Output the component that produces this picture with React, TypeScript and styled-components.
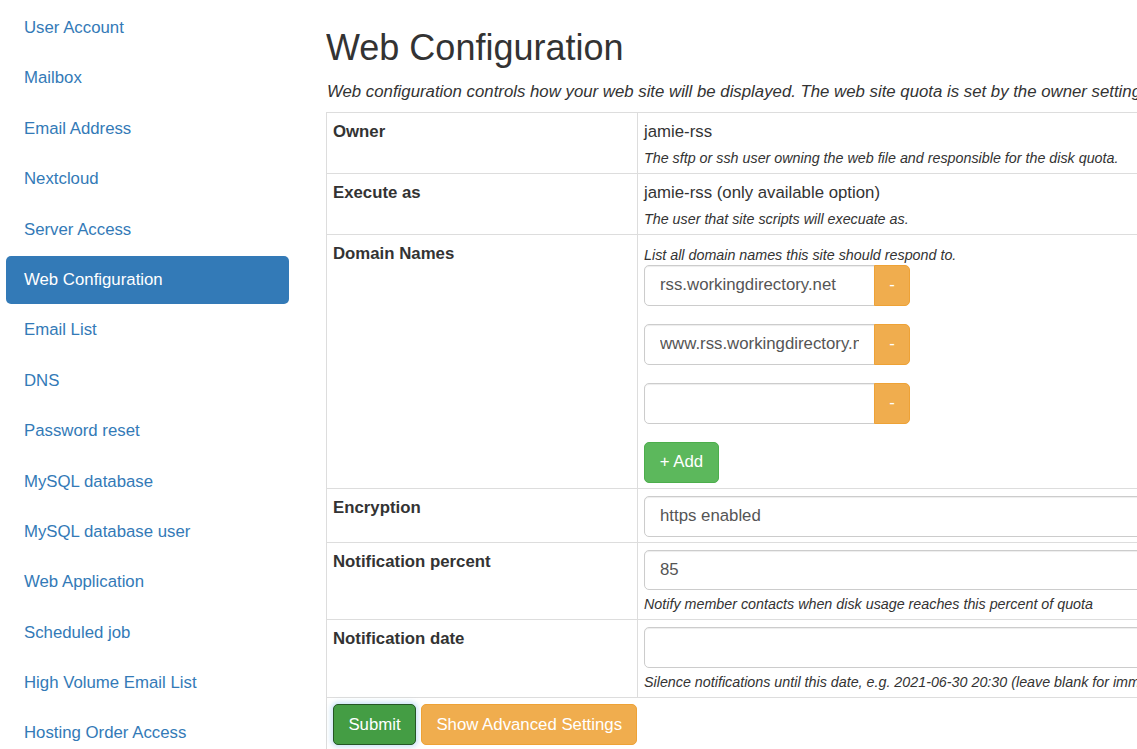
import styled, { createGlobalStyle } from "styled-components"

const GlobalStyle = createGlobalStyle`
	html, body {
		margin: 0;
		padding: 0;
		overflow: hidden;
	}
	body {
		font-family: "Liberation Sans", Helvetica, Arial, sans-serif;
		font-size: 16.8px;
		line-height: 24px;
		color: #333;
		background: #fff;
	}
	* {
		box-sizing: border-box;
	}
`

const Page = styled.div`
	display: flex;
	width: 1137px;
	height: 749px;
`

const Sidebar = styled.nav`
	flex: 0 0 326px;
	padding: 4px 0 0 6px;
`

const Pills = styled.ul`
	list-style: none;
	margin: 0;
	padding: 0;
	width: 283px;
	display: flex;
	flex-direction: column;
	gap: 2.4px;
`

const Pill = styled.li<{ $active?: boolean }>`
	display: block;
	padding: 12px 18px;
	border-radius: 5px;
	line-height: 24px;
	color: ${(p) => (p.$active ? "#fff" : "#337ab7")};
	background: ${(p) => (p.$active ? "#337ab7" : "transparent")};
	cursor: pointer;
`

const Main = styled.main`
	flex: 1;
	min-width: 0;
	overflow: hidden;
`

const Title = styled.h1`
	font-size: 36px;
	font-weight: 400;
	line-height: 40px;
	margin: 28px 0 12px;
	color: #333;
`

const Lead = styled.p`
	font-style: italic;
	white-space: nowrap;
	margin: 0 0 8px 1px;
`

const Table = styled.table`
	width: 1000px;
	table-layout: fixed;
	border-collapse: collapse;
	border: 1px solid #ddd;
`

const Row = styled.tr`
	border-top: 1px solid #ddd;
`

const LabelCell = styled.th`
	width: 311px;
	padding: 7px 6px 5px;
	text-align: left;
	vertical-align: top;
	font-weight: 700;
	border-right: 1px solid #ddd;
`

const ValueCell = styled.td`
	padding: 7px 6px 5px;
	vertical-align: top;
	overflow: hidden;
`

const ActionCell = styled.td`
	padding: 6px;
`

const ButtonBar = styled.div`
	display: flex;
	gap: 5px;
`

const Hint = styled.div<{ $gap?: number }>`
	font-size: 14.3px;
	font-style: italic;
	line-height: 20px;
	margin-top: ${(p) => p.$gap ?? 4}px;
	white-space: nowrap;
`

const Field = styled.input<{ $grouped?: boolean }>`
	display: block;
	width: ${(p) => (p.$grouped ? "231px" : "100%")};
	height: 40.8px;
	padding: 7px 15px;
	font-family: inherit;
	font-size: 16.8px;
	color: #555;
	background: #fff;
	border: 1px solid #ccc;
	border-radius: ${(p) => (p.$grouped ? "5px 0 0 5px" : "5px")};
	box-shadow: inset 0 1px 1px rgba(0, 0, 0, 0.075);
	outline: none;
`

const DomainList = styled.div`
	display: flex;
	flex-direction: column;
	gap: 18.2px;
`

const InputGroup = styled.div`
	display: flex;
`

const Button = styled.button<{ $kind: "warning" | "success" | "active-success" }>`
	height: 40.8px;
	padding: 7px 14.4px;
	font-family: inherit;
	font-size: 16.8px;
	line-height: 24px;
	white-space: nowrap;
	color: #fff;
	border-radius: 5px;
	cursor: pointer;
	background: ${(p) =>
		p.$kind === "warning" ? "#f0ad4e" : p.$kind === "success" ? "#5cb85c" : "#449d44"};
	border: 1px solid
		${(p) =>
			p.$kind === "warning" ? "#eea236" : p.$kind === "success" ? "#4cae4c" : "#255625"};
	box-shadow: ${(p) =>
		p.$kind === "active-success" ? "0 0 5px 2px rgba(102, 175, 233, 0.35)" : "none"};
`

const MinusButton = styled(Button)`
	width: 36px;
	padding: 0;
	border-radius: 0 5px 5px 0;
	margin-left: -1px;
`

const AddButton = styled(Button)`
	align-self: flex-start;
	width: 75px;
	padding: 0;
`

const navItems = [
	"User Account",
	"Mailbox",
	"Email Address",
	"Nextcloud",
	"Server Access",
	"Web Configuration",
	"Email List",
	"DNS",
	"Password reset",
	"MySQL database",
	"MySQL database user",
	"Web Application",
	"Scheduled job",
	"High Volume Email List",
	"Hosting Order Access",
]

const domains = ["rss.workingdirectory.net", "www.rss.workingdirectory.net", ""]

export default function App() {
	return (
		<>
			<GlobalStyle />
			<Page>
				<Sidebar>
					<Pills>
						{navItems.map((item) => (
							<Pill
								key={item}
								$active={item === "Web Configuration"}
							>
								{item}
							</Pill>
						))}
					</Pills>
				</Sidebar>

				<Main>
					<Title>Web Configuration</Title>
					<Lead>
						Web configuration controls how your web site will be displayed. The web site quota is set
						by the owner settings.
					</Lead>

					<Table>
						<tbody>
							<Row>
								<LabelCell>Owner</LabelCell>
								<ValueCell>
									jamie-rss
									<Hint>The sftp or ssh user owning the web file and responsible for the disk quota.</Hint>
								</ValueCell>
							</Row>
							<Row>
								<LabelCell>Execute as</LabelCell>
								<ValueCell>
									jamie-rss (only available option)
									<Hint>The user that site scripts will execuate as.</Hint>
								</ValueCell>
							</Row>
							<Row>
								<LabelCell>Domain Names</LabelCell>
								<ValueCell>
									<Hint $gap={3}>List all domain names this site should respond to.</Hint>
									<DomainList>
										{domains.map((d, i) => (
											<InputGroup key={i}>
												<Field
													$grouped
													defaultValue={d}
												/>
												<MinusButton $kind="warning">-</MinusButton>
											</InputGroup>
										))}
										<AddButton $kind="success">+ Add</AddButton>
									</DomainList>
								</ValueCell>
							</Row>
							<Row>
								<LabelCell>Encryption</LabelCell>
								<ValueCell>
									<Field defaultValue="https enabled" />
								</ValueCell>
							</Row>
							<Row>
								<LabelCell>Notification percent</LabelCell>
								<ValueCell>
									<Field defaultValue="85" />
									<Hint>Notify member contacts when disk usage reaches this percent of quota</Hint>
								</ValueCell>
							</Row>
							<Row>
								<LabelCell>Notification date</LabelCell>
								<ValueCell>
									<Field defaultValue="" />
									<Hint>
										Silence notifications until this date, e.g. 2021-06-30 20:30 (leave blank for immediate
										notifications)
									</Hint>
								</ValueCell>
							</Row>
							<Row>
								<ActionCell colSpan={2}>
									<ButtonBar>
										<Button $kind="active-success">Submit</Button>
										<Button $kind="warning">Show Advanced Settings</Button>
									</ButtonBar>
								</ActionCell>
							</Row>
						</tbody>
					</Table>
				</Main>
			</Page>
		</>
	)
}
